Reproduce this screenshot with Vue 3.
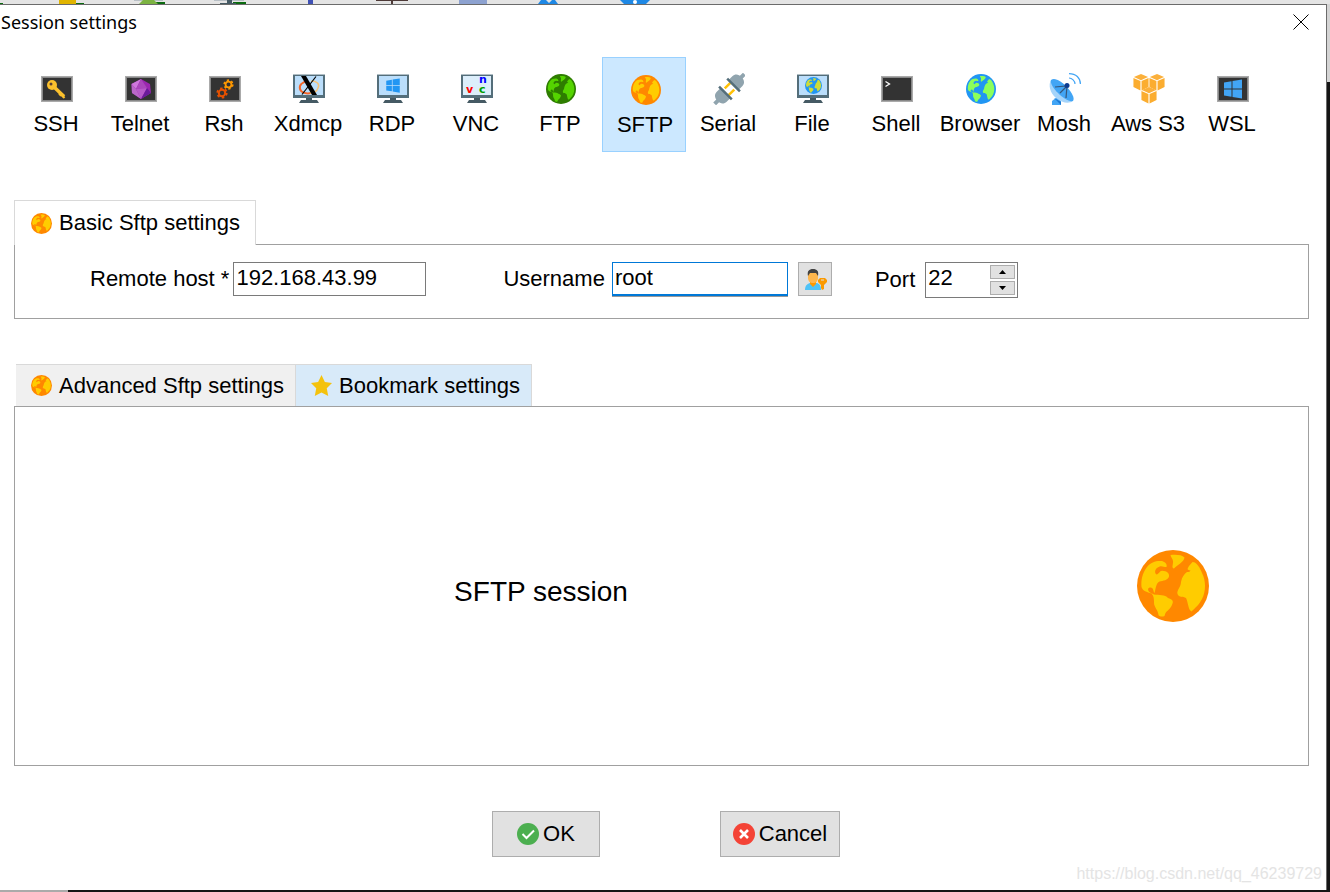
<script setup>
import { ref } from 'vue'

const sessionTypes = [
    { id: 'ssh', title: 'SSH' },
    { id: 'telnet', title: 'Telnet' },
    { id: 'rsh', title: 'Rsh' },
    { id: 'xdmcp', title: 'Xdmcp' },
    { id: 'rdp', title: 'RDP' },
    { id: 'vnc', title: 'VNC' },
    { id: 'ftp', title: 'FTP' },
    { id: 'sftp', title: 'SFTP' },
    { id: 'serial', title: 'Serial' },
    { id: 'file', title: 'File' },
    { id: 'shell', title: 'Shell' },
    { id: 'browser', title: 'Browser' },
    { id: 'mosh', title: 'Mosh' },
    { id: 'aws', title: 'Aws S3' },
    { id: 'wsl', title: 'WSL' },
]

const activeType = ref('sftp')
const host = ref('192.168.43.99')
const username = ref('root')
const port = ref(22)

const changePort = (step) => {
    port.value = Math.min(65535, Math.max(1, Number(port.value) + step))
}
</script>

<template>
    <svg class="sprite" aria-hidden="true">
        <symbol id="globe" viewBox="0 0 72 72">
            <circle cx="36" cy="36" r="36" fill="currentColor" />
            <g fill="var(--land)">
                <path d="M4.500 37C4 30 5 24 10 17C14 12 19 10.500 25 11C28 12 30.500 14 29.500 17C26 17 24 14.500 20 18C17.500 20 17.500 24 20 24.500C22 23.500 22.500 21 25 20.700C30 21 32.500 23 32 26.500C31 30 26 31 22.500 31.500C19 33 19 38 17.500 43C16 42 17 37 13 37.500C10 38 11 41 13 42.500L17 44.500C22 45 28 44.500 31 48C37 50 36.500 52 34.500 56C32 61 29 60 27.500 66C25 67 22 66.500 21.500 65C21 60 17 57 17 53C17 49 17 46 14.500 43.500C10 42 5.500 41 4.500 37Z" />
                <path d="M33.500 5C40 4.500 45 5 47.500 7.500C47 12 40 15 37 18.500C34 18 36.500 14 36 11C35.500 8 34 8 33.500 5Z" />
                <path d="M55.500 12C60 12 63 18 65 23C69 31 69 41 65 49C62 55 58 58 54.500 61.500C51 60 51 51 49 48C46 46 42 48 40.500 44C39.500 40 44 37 44 32C45 27 47 24 50 22C52 22 53 21.500 53.500 20.500C49 20 51 18 52 16Z" />
            </g>
        </symbol>
        <symbol id="terminal" viewBox="0 0 34 32">
            <rect x="2" y="3" width="32" height="26" fill="#aaa" />
            <rect x="3" y="4" width="30" height="24" fill="#888" />
            <rect x="4" y="5" width="28" height="22" fill="#333" />
        </symbol>
        <symbol id="monitor" viewBox="0 0 34 32">
            <path d="M2 1H34V25H2Z" fill="#546e7a" />
            <path d="M2 1H34V2H2Z" fill="#b0bec5" />
            <path d="M4 3H32V22H4Z" fill="var(--screen, #bbdefb)" />
            <path d="M15 25H21V27H26L28 30H8L10 27H15Z" fill="#455a64" />
        </symbol>
        <symbol id="windows" viewBox="0 0 20 20">
            <path d="M1 3.500 8.500 2.200V9.500H1ZM9.500 2 19 .500V9.500H9.500ZM1 10.500H8.500V17.800L1 16.500ZM9.500 10.500H19V19.500L9.500 18Z" fill="currentColor" />
        </symbol>
        <symbol id="gear" viewBox="-6 -6 12 12">
            <circle r="3.200" fill="none" stroke="currentColor" stroke-width="2" />
            <circle r="4.700" fill="none" stroke="currentColor" stroke-width="1.800" stroke-dasharray="2.460 2.460" />
        </symbol>
        <symbol id="cube" viewBox="0 0 16 18">
            <path d="M8 0 15.500 3.200 8 6.500.500 3.200Z" fill="#fbb03b" />
            <path d="M0 4.200 7.400 7.500V17.500L0 13.800ZM16 4.200 8.600 7.500V17.500L16 13.800Z" fill="#fbad30" />
        </symbol>
    </svg>

    <div class="desktop">
        <div class="backdrop">
            <svg class="backdrop__icons" viewBox="0 0 660 4" width="660" height="4" aria-hidden="true">
                <path d="M0 3H3V4H0ZM73 3H84V4H73ZM153 2H165V4H153ZM233 2H246V4H233Z" fill="#0b6b10" />
                <path d="M59 0H76V4H59Z" fill="#e0b400" />
                <path d="M134 0H163V1H134ZM214 0H244V1H214Z" fill="#b8bfc5" />
                <path d="M143 0H154L158 4H139Z" fill="#7cb342" />
                <path d="M227 0H232V3H236V4H220V3H227Z" fill="#455a64" />
                <path d="M308 0H313V4H308Z" fill="#3f51b5" />
                <path d="M376 0H408V1H376ZM391 1H393V4H391Z" fill="#4e3a38" />
                <path d="M459 0H487V4H459Z" fill="#8da2d0" />
                <path d="M541 0H546L549 3L552 0H555L558 4H538ZM620 0H650L646 4H624Z" fill="#1e88e5" />
                <circle cx="635" cy="2" r="2" fill="#fff" />
            </svg>
        </div>

        <div class="body">
            <main class="dialog">
                <header class="titlebar">
                    <h1 class="titlebar__text">Session settings</h1>
                    <button class="titlebar__close" type="button" aria-label="Close">
                        <svg viewBox="0 0 16 16" width="16" height="16">
                            <path d="M.500.500 15.500 15.500M15.500.500.500 15.500" stroke="#000" stroke-width="1" />
                        </svg>
                    </button>
                </header>

                <nav class="types">
                    <button
                        v-for="{ id, title } in sessionTypes"
                        :key="id"
                        type="button"
                        class="type"
                        :class="{ type_active: id === activeType }"
                        @click="activeType = id"
                    >
                        <svg class="type__icon" viewBox="0 0 34 32" aria-hidden="true">
                            <template v-if="id === 'ssh'">
                                <use href="#terminal" width="34" height="32" />
                                <path d="M14.500 13.500 25 23.500" stroke="#fbc02d" stroke-width="3.600" />
                                <path d="M20 20.500 22 23M22.500 21.500 25.500 25" stroke="#fbc02d" stroke-width="2" />
                                <circle cx="13" cy="12" r="5" fill="#fbc02d" />
                                <circle cx="12" cy="11" r="1.500" fill="#5d4037" />
                            </template>
                            <template v-else-if="id === 'telnet'">
                                <use href="#terminal" width="34" height="32" />
                                <path d="M18 6 27 11 28 20 18 26 9 20 8.500 11Z" fill="#9c27b0" />
                                <path d="M18 6 13 16 8.500 11Z" fill="#ce78dc" />
                                <path d="M13 16 18 26 9 20 8.500 11Z" fill="#ba68c8" />
                                <path d="M18 6 24 15 13 16Z" fill="#ab47bc" />
                                <path d="M13 16 24 15 18 26Z" fill="#b75bc8" />
                                <path d="M24 15 28 20 18 26Z" fill="#6a1b9a" />
                            </template>
                            <template v-else-if="id === 'rsh'">
                                <use href="#terminal" width="34" height="32" />
                                <use class="gear_red" href="#gear" x="9" y="14" width="12" height="12" />
                                <use class="gear_amber" href="#gear" x="16" y="6" width="11" height="11" />
                            </template>
                            <template v-else-if="id === 'xdmcp'">
                                <use href="#monitor" width="34" height="32" />
                                <path d="M17 8C11 9 8 12 9 16C10 20 16 21 20 20" fill="none" stroke="#f4662a" stroke-width="2" />
                                <path d="M20 8C26 8 29 11 27 15C26 18 23 20 19 20" fill="none" stroke="#f6c27a" stroke-width="1.500" />
                                <path d="M25 3.500 11 21.500" stroke="#000" stroke-width="1.200" />
                                <path d="M10 3H15L26 22H21Z" fill="#000" />
                            </template>
                            <template v-else-if="id === 'rdp'">
                                <use href="#monitor" width="34" height="32" />
                                <use class="windows_deep" href="#windows" x="10" y="5" width="16" height="15" />
                            </template>
                            <template v-else-if="id === 'vnc'">
                                <use class="monitor_pale" href="#monitor" width="34" height="32" />
                                <text class="vnc" x="7" y="20" fill="#f00">v</text>
                                <text class="vnc" x="20" y="10" fill="#00f">n</text>
                                <text class="vnc" x="20" y="20" fill="#00a000">c</text>
                            </template>
                            <use v-else-if="id === 'ftp'" class="globe_green" href="#globe" x="3" y="1" width="30" height="30" />
                            <use v-else-if="id === 'sftp'" class="globe_orange" href="#globe" x="3" y="1" width="30" height="30" />
                            <use v-else-if="id === 'browser'" class="globe_blue" href="#globe" x="3" y="1" width="30" height="30" />
                            <template v-else-if="id === 'serial'">
                                <g transform="translate(18.500 16) rotate(45)">
                                    <path d="M-2-21H2V-16H-2ZM-2 21H2V16H-2Z" fill="#90a4ae" />
                                    <path d="M-7-6V-11C-7-15-4-17 0-17C4-17 7-15 7-11V-6ZM-7 6V11C-7 15-4 17 0 17C4 17 7 15 7 11V6Z" fill="#90a4ae" />
                                    <path d="M-5-5H-2.500V3H-5ZM2.500-3H5V5H2.500Z" fill="#ffc107" />
                                    <path d="M-9-7H9V-4.500H-9ZM-9 4.500H9V7H-9Z" fill="#546e7a" />
                                </g>
                            </template>
                            <template v-else-if="id === 'file'">
                                <use href="#monitor" width="34" height="32" />
                                <use class="globe_lime" href="#globe" x="10" y="4" width="17" height="17" />
                            </template>
                            <template v-else-if="id === 'shell'">
                                <use href="#terminal" width="34" height="32" />
                                <path d="M6.500 8.500 10.500 11 6.500 13.500" fill="none" stroke="#fff" stroke-width="1.300" />
                            </template>
                            <template v-else-if="id === 'mosh'">
                                <path d="M5 32V28L10 24L14 28V32Z" fill="#42a5f5" />
                                <path d="M7 25 14 29V32Z" fill="#1976d2" />
                                <path d="M4 7C1 12 3 20 9 25C15 30 22 31 26 28Z" fill="#a5d4fa" />
                                <path d="M4 7C8 4 15 9 20 14C25 20 28 25 26 28C22 29 16 25 11 20C6 15 3 10 4 7Z" fill="#42a5f5" />
                                <path d="M8 14 20 13 19 25M13 20 20 13" fill="none" stroke="#37577a" stroke-width="1.200" />
                                <circle cx="20" cy="12.500" r="2.500" fill="#0d3c91" />
                                <path d="M22 5C25 5 28 8 28 11M22 .600C29 .600 33.400 5 33.400 11" fill="none" stroke="#42a5f5" stroke-width="1.200" />
                            </template>
                            <template v-else-if="id === 'aws'">
                                <use href="#cube" x="2" y="1" width="16" height="17" />
                                <use href="#cube" x="18" y="1" width="16" height="17" />
                                <use href="#cube" x="10" y="14" width="16" height="17" />
                            </template>
                            <template v-else>
                                <use href="#terminal" width="34" height="32" />
                                <use class="windows_light" href="#windows" x="8" y="6" width="20" height="20" />
                            </template>
                        </svg>
                        <span class="type__title">{{ title }}</span>
                    </button>
                </nav>

                <section class="section">
                    <div class="tabs">
                        <button class="tab tab_current" type="button">
                            <svg class="tab__icon globe_orange" aria-hidden="true"><use href="#globe" /></svg>
                            Basic Sftp settings
                        </button>
                    </div>
                    <form class="panel fields" @submit.prevent>
                        <div class="field field_host">
                            <label for="host">Remote host *</label>
                            <input id="host" v-model="host" class="field__input field__input_host" type="text">
                        </div>
                        <div class="field field_user">
                            <label for="username">Username</label>
                            <input id="username" v-model="username" class="field__input field__input_user" type="text">
                            <button class="user-button" type="button" aria-label="Manage users">
                                <svg viewBox="0 0 24 24" width="24" height="24">
                                    <path d="M2 23C2 18 5 16 8 16H13C16 16 18 18 18 23Z" fill="#4fc3f7" />
                                    <path d="M7 15H13V17L10 20L7 17Z" fill="#ff9800" />
                                    <path d="M5 6H15V11C15 14 13 16 10 16C7 16 5 14 5 11Z" fill="#ffb74d" />
                                    <path d="M5 9C4 4 6 2 10 2C14 2 16 4 15 9L13 6H7Z" fill="#424242" />
                                    <path d="M15 13 17 11H22L24 13V15L21 18V22L19 23L18 21V18L15 15Z" fill="#fb9a00" />
                                    <path d="M18 12.500H21V13.500H18Z" fill="#e1e1e1" />
                                </svg>
                            </button>
                        </div>
                        <div class="field field_port">
                            <label for="port">Port</label>
                            <div class="spin">
                                <input id="port" v-model="port" class="spin__input" type="text" inputmode="numeric">
                                <div class="spin__buttons">
                                    <button class="spin__button" type="button" aria-label="Increase port" @click="changePort(1)">
                                        <svg viewBox="0 0 7 4" width="7" height="4"><path d="M0 4 3.500 0 7 4Z" /></svg>
                                    </button>
                                    <button class="spin__button" type="button" aria-label="Decrease port" @click="changePort(-1)">
                                        <svg viewBox="0 0 7 4" width="7" height="4"><path d="M0 0 3.500 4 7 0Z" /></svg>
                                    </button>
                                </div>
                            </div>
                        </div>
                    </form>
                </section>

                <section class="section section_grow">
                    <div class="tabs tabs_inset">
                        <button class="tab tab_plain" type="button">
                            <svg class="tab__icon globe_orange" aria-hidden="true"><use href="#globe" /></svg>
                            Advanced Sftp settings
                        </button>
                        <button class="tab tab_hover" type="button">
                            <svg class="tab__icon" viewBox="0 0 20 20" aria-hidden="true">
                                <path d="M10 0 13.200 6.600 20 7.500 15 12.600 16.400 20 10 16.600 3.600 20 5 12.600 0 7.500 6.800 6.600Z" fill="#f4c20d" />
                            </svg>
                            Bookmark settings
                        </button>
                    </div>
                    <div class="panel session">
                        <p class="session__title">SFTP session</p>
                        <div class="session__aside">
                            <svg class="session__globe globe_orange" aria-hidden="true"><use href="#globe" /></svg>
                        </div>
                    </div>
                </section>

                <footer class="actions">
                    <button class="action action_ok" type="button">
                        <svg viewBox="0 0 22 22" width="22" height="22" aria-hidden="true">
                            <circle cx="11" cy="11" r="11" fill="#4caf50" />
                            <path d="M5.500 11 9.500 15 17 7.500" fill="none" stroke="#fff" stroke-width="2" />
                        </svg>
                        OK
                    </button>
                    <button class="action action_cancel" type="button">
                        <svg viewBox="0 0 22 22" width="22" height="22" aria-hidden="true">
                            <circle cx="11" cy="11" r="11" fill="#f44336" />
                            <path d="M7 7 15 15M15 7 7 15" stroke="#fff" stroke-width="2.600" />
                        </svg>
                        Cancel
                    </button>
                </footer>
            </main>
            <div class="edge"></div>
        </div>
        <div class="bottom"></div>
        <span class="watermark">https://blog.csdn.net/qq_46239729</span>
    </div>
</template>

<style>
body {
    margin: 0;
    background: #fff;
}
</style>

<style scoped>
.sprite {
    position: absolute;
    width: 0;
    height: 0;
}
.desktop {
    position: relative;
    display: flex;
    flex-direction: column;
    min-height: 100vh;
    font-family: "Liberation Sans", Arial, sans-serif;
    font-size: 22px;
    line-height: 26px;
    color: #000;
}
button,
input {
    box-sizing: border-box;
    margin: 0;
    font: inherit;
    color: inherit;
    border-radius: 0;
}
.backdrop {
    height: 4px;
    background: #e4e4e4;
    overflow: hidden;
}
.backdrop__icons {
    display: block;
}
.body {
    flex: 1;
    display: flex;
}
.dialog {
    flex: 1;
    display: flex;
    flex-direction: column;
    box-sizing: border-box;
    padding: 0 17px 33px 14px;
    border: solid #6b6b6b;
    border-width: 1px 1px 0 0;
    background: #fff;
}
.edge {
    width: 3px;
    background: linear-gradient(#d4d4d4 78px, #151515 78px);
}
.bottom {
    height: 2px;
    background: linear-gradient(90deg, #aaa 68px, #151515 68px);
}

.titlebar {
    display: flex;
    align-items: center;
    justify-content: space-between;
    height: 34px;
    margin: 0 0 18px -13px;
}
.titlebar__text {
    margin: 0;
    font: 18px/24px "Noto Sans", "Open Sans", sans-serif;
}
.titlebar__close {
    display: flex;
    padding: 0;
    border: 0;
    background: none;
}

.types {
    display: flex;
}
.type {
    display: flex;
    flex-direction: column;
    align-items: center;
    gap: 6px;
    width: 84px;
    height: 95px;
    padding: 15px 0 0;
    border: 1px solid transparent;
    background: none;
    white-space: nowrap;
}
.type_active {
    padding: 16px 0 0 2px;
    background: #cce8ff;
    border-color: #99d1ff;
}
.type__icon {
    width: 34px;
    height: 32px;
    flex: none;
}
.vnc {
    font: bold 11px "DejaVu Sans", sans-serif;
}
.globe_orange {
    color: #ff8800;
    --land: #ffcc00;
}
.globe_green {
    color: #2e7d00;
    --land: #55d400;
}
.globe_blue {
    color: #2196f3;
    --land: #8cff5a;
}
.globe_lime {
    color: #2196f3;
    --land: #cddc39;
}
.windows_deep {
    color: #2196f3;
}
.windows_light {
    color: #42a5f5;
}
.gear_red {
    color: #e65100;
}
.gear_amber {
    color: #ff9800;
}
.monitor_pale {
    --screen: #dceefb;
}

.section {
    margin-top: 48px;
}
.section_grow {
    flex: 1;
    display: flex;
    flex-direction: column;
    margin-top: 45px;
}
.tabs {
    display: flex;
}
.tabs_inset {
    padding-left: 2px;
}
.tab {
    display: flex;
    align-items: center;
    gap: 7px;
    height: 42px;
    padding: 0 11px 0 15px;
    border: 1px solid #d9d9d9;
    border-width: 1px 1px 0 0;
    white-space: nowrap;
}
.tab_current {
    position: relative;
    height: 45px;
    margin-bottom: -1px;
    padding: 0 15px 0 16px;
    border-left-width: 1px;
    background: #fff;
}
.tab_plain {
    background: #f0f0f0;
}
.tab_hover {
    background: #d8eaf9;
}
.tab__icon {
    width: 21px;
    height: 21px;
    flex: none;
}
.panel {
    border: 1px solid #a0a0a0;
}

.fields {
    display: flex;
    align-items: flex-start;
    gap: 43px;
    min-height: 56px;
    padding: 17px 0 0 75px;
}
.field {
    display: flex;
    align-items: center;
}
.field_host {
    gap: 4px;
    margin-right: 34px;
}
.field_user {
    gap: 7px;
}
.field_port {
    gap: 10px;
}
.field__input {
    height: 34px;
    padding: 0 2px 2px;
    border: 1px solid #7a7a7a;
    outline: none;
    background: #fff;
}
.field__input_host {
    width: 193px;
}
.field__input_user {
    width: 176px;
    border-color: #0078d7;
    box-shadow: inset 0 -1px 0 #0078d7, 0 1px 0 #999;
}
.user-button {
    display: flex;
    align-items: center;
    justify-content: center;
    width: 34px;
    height: 34px;
    margin-left: 3px;
    padding: 0;
    border: 1px solid #adadad;
    background: #e1e1e1;
}
.spin {
    display: flex;
    box-sizing: border-box;
    width: 93px;
    height: 36px;
    border: 1px solid #7a7a7a;
}
.spin__input {
    flex: 1;
    min-width: 0;
    padding: 0 2px 4px;
    border: 0;
    outline: none;
    background: none;
}
.spin__buttons {
    display: flex;
    flex-direction: column;
    gap: 2px;
    padding: 2px;
}
.spin__button {
    display: flex;
    align-items: center;
    justify-content: center;
    width: 25px;
    height: 14px;
    padding: 0;
    border: 1px solid #adadad;
    background: #e1e1e1;
}

.session {
    flex: 1;
    display: grid;
    grid-template-columns: 1fr 241px;
    align-items: center;
}
.session__title {
    margin: 0;
    padding-top: 12px;
    font-size: 28px;
    line-height: 32px;
    text-align: center;
}
.session__aside {
    display: flex;
    padding-left: 70px;
}
.session__globe {
    width: 72px;
    height: 72px;
}

.actions {
    display: flex;
    justify-content: center;
    gap: 120px;
    margin-top: 45px;
    padding-left: 9px;
}
.action {
    display: flex;
    align-items: center;
    justify-content: center;
    gap: 4px;
    height: 46px;
    padding: 0;
    border: 1px solid #adadad;
    background: #e1e1e1;
}
.action_ok {
    width: 108px;
}
.action_cancel {
    width: 120px;
}
.watermark {
    position: absolute;
    right: 8px;
    bottom: 8px;
    font-size: 16px;
    line-height: 20px;
    color: #e4e4e4;
}
</style>
